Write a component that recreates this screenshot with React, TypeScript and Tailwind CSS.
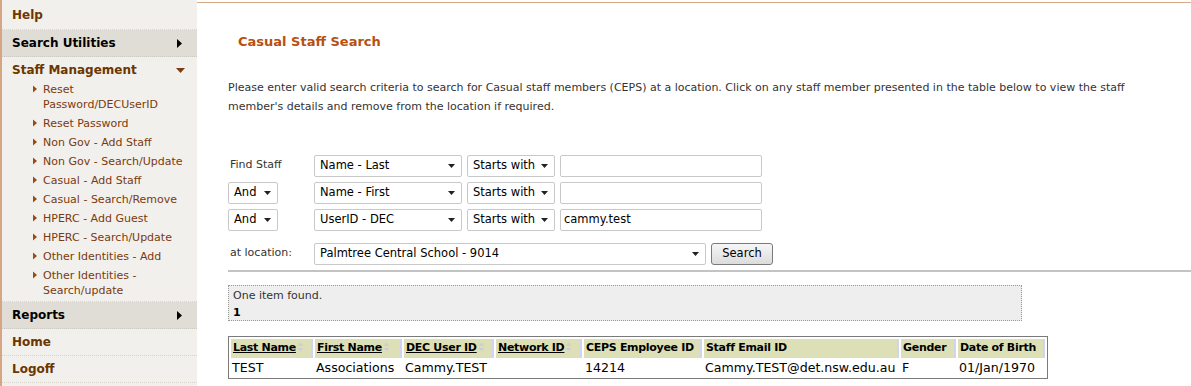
import React from 'react'

const font = { fontFamily: 'Verdana, "DejaVu Sans", sans-serif' }

function Tri({ dir = 'right', className = '' }: { dir?: 'right' | 'down'; className?: string }) {
  if (dir === 'down')
    return (
      <svg width="9" height="5" viewBox="0 0 9 5" className={className}>
        <path d="M0 0h9L4.5 5z" fill="currentColor" />
      </svg>
    )
  return (
    <svg width="5" height="9" viewBox="0 0 5 9" className={className}>
      <path d="M0 0l5 4.5L0 9z" fill="currentColor" />
    </svg>
  )
}

const subItems = [
  ['Reset', 'Password/DECUserID'],
  ['Reset Password'],
  ['Non Gov - Add Staff'],
  ['Non Gov - Search/Update'],
  ['Casual - Add Staff'],
  ['Casual - Search/Remove'],
  ['HPERC - Add Guest'],
  ['HPERC - Search/Update'],
  ['Other Identities - Add'],
  ['Other Identities -', 'Search/update'],
]

function Sidebar() {
  return (
    <div className="w-[197px] shrink-0 bg-[#f2f0ec] border-l-2 border-[#d6a584] text-[12px]">
      <div className="h-[30px] flex items-center pl-[10px] font-bold text-[#6b3600] border-b border-dotted border-[#d8d4cc]">
        Help
      </div>
      <div className="h-[27px] flex items-center justify-between pl-[10px] pr-[15px] font-bold text-black bg-[#e0ddd6] border-b border-dotted border-[#cfcac1]">
        Search Utilities
        <Tri />
      </div>
      <div className="h-[23px] pt-[6px] leading-[14px] flex items-start justify-between pl-[10px] pr-[12px] font-bold text-[#6b3600]">
        Staff Management
        <Tri dir="down" className="text-[#7a3d10] mt-[5px]" />
      </div>
      <div className="pb-[1px] border-b border-dotted border-[#d8d4cc]">
        {subItems.map((lines, i) => (
          <div key={i} className="flex pl-[31px] pr-2 text-[11px] leading-[15px] text-[#7a3a0f] py-[2px]">
            <Tri className="text-[#9a4a12] mt-[3px] w-[4px] h-[8px] mr-[6px] shrink-0" />
            <div>
              {lines.map((l) => (
                <div key={l}>{l}</div>
              ))}
            </div>
          </div>
        ))}
      </div>
      <div className="h-[27px] flex items-center justify-between pl-[10px] pr-[15px] font-bold text-black bg-[#e0ddd6] border-b border-dotted border-[#cfcac1]">
        Reports
        <Tri />
      </div>
      <div className="h-[27px] flex items-center pl-[10px] font-bold text-[#6b3600] border-b border-dotted border-[#d8d4cc]">
        Home
      </div>
      <div className="h-[27px] flex items-center pl-[10px] font-bold text-[#6b3600] border-b border-dotted border-[#d8d4cc]">
        Logoff
      </div>
      <div className="h-[20px]" />
    </div>
  )
}

function Select({ w, value }: { w: string; value: string }) {
  return (
    <div
      className={`${w} h-[22px] shrink-0 flex items-center justify-between pl-[5px] pr-[6px] border border-[#c9c9c9] rounded-[2px] bg-white text-[11.5px] text-black`}
    >
      <span>{value}</span>
      <Tri dir="down" className="w-[7px] h-[4px] text-[#222]" />
    </div>
  )
}

function Input({ value = '' }: { value?: string }) {
  return (
    <div className="w-[202px] h-[22px] flex items-center px-[3px] border border-[#c9c9c9] rounded-[2px] bg-white text-[11.5px] text-black">
      {value}
    </div>
  )
}

const cols = [
  { t: 'Last Name', w: 'w-[82px]', s: true },
  { t: 'First Name', w: 'w-[87px]', s: true },
  { t: 'DEC User ID', w: 'w-[90px]', s: true },
  { t: 'Network ID', w: 'w-[86px]', s: true },
  { t: 'CEPS Employee ID', w: 'w-[118px]', s: false },
  { t: 'Staff Email ID', w: 'w-[195px]', s: false },
  { t: 'Gender', w: 'w-[55px]', s: false },
  { t: 'Date of Birth', w: 'w-[87px]', s: false },
]
const row = ['TEST', 'Associations', 'Cammy.TEST', '', '14214', 'Cammy.TEST@det.nsw.edu.au', 'F', '01/Jan/1970']

function SortIcon() {
  return (
    <svg width="7" height="10" viewBox="0 0 7 10" className="inline-block ml-[1px] align-[-1px]">
      <path d="M0.5 4L3.5 0.5 6.5 4z" fill="#cfcfcf" />
      <path d="M0.5 6h6L3.5 9.5z" fill="#cfcfcf" />
    </svg>
  )
}

export default function App() {
  return (
    <div className="w-[1191px] h-[386px] overflow-hidden bg-white flex text-[#333]" style={font}>
      <Sidebar />
      <div className="flex-1 pt-[2px]">
        <div className="h-[1px] bg-[#d9a98a]" />
        <div className="pl-[31px] pr-[10px]">
          <h1 className="mt-[29px] ml-[10px] text-[13px] font-bold text-[#b8500f]">Casual Staff Search</h1>
          <p className="mt-[26px] text-[11px] leading-[19px] text-[#333]">
            Please enter valid search criteria to search for Casual staff members (CEPS) at a location. Click on any staff
            member presented in the table below to view the staff member's details and remove from the location if required.
          </p>
          <div className="mt-[39px] flex flex-col gap-[5px]">
            <div className="flex items-center">
              <div className="w-[86px] pl-[2px] text-[11px]">Find Staff</div>
              <div className="flex gap-[5px]">
                <Select w="w-[148px]" value="Name - Last" />
                <Select w="w-[88px]" value="Starts with" />
                <Input />
              </div>
            </div>
            {[
              ['Name - First', ''],
              ['UserID - DEC', 'cammy.test'],
            ].map(([f, v]) => (
              <div key={f} className="flex items-center">
                <div className="w-[86px]">
                  <Select w="w-[50px]" value="And" />
                </div>
                <div className="flex gap-[5px]">
                  <Select w="w-[148px]" value={f} />
                  <Select w="w-[88px]" value="Starts with" />
                  <Input value={v} />
                </div>
              </div>
            ))}
          </div>
          <div className="mt-[12px] flex items-center">
            <div className="w-[86px] pl-[2px] text-[11px]">at location:</div>
            <Select w="w-[392px]" value="Palmtree Central School - 9014" />
            <button className="ml-[5px] w-[62px] h-[22px] border border-[#7a7a7a] rounded-[3px] bg-gradient-to-b from-[#f6f6f6] to-[#dcdcdc] text-[11.5px] text-black">
              Search
            </button>
          </div>
        </div>
        <div className="ml-[31px] mt-[5px] h-[2px] bg-[#c3c3c3]" />
        <div className="ml-[31px] mt-[13px] w-[794px] h-[36px] border border-dotted border-[#9a9a9a] bg-[#eeeeee] px-[4px] pt-[1px] text-[11px] leading-[17px]">
          <div>One item found.</div>
          <div className="font-bold text-black">1</div>
        </div>
        <table className="ml-[31px] mt-[15px] table-fixed border border-[#7a7a7a] border-separate border-spacing-[2px] text-[12.6px] text-black">
          <thead>
            <tr>
              {cols.map((c) => (
                <th
                  key={c.t}
                  className={`${c.w} h-[19px] p-0 pl-[2px] text-left text-[11px] tracking-[-0.3px] font-bold bg-[#dde0b7] border-r-2 border-[#d0d4f2] whitespace-nowrap overflow-hidden`}
                >
                  {c.s ? (
                    <>
                      <span className="underline">{c.t}</span>
                      <SortIcon />
                    </>
                  ) : (
                    c.t
                  )}
                </th>
              ))}
            </tr>
          </thead>
          <tbody>
            <tr>
              {row.map((v, i) => (
                <td key={i} className="p-0 pl-[1px] h-[16px] leading-[16px] whitespace-nowrap overflow-visible">
                  {v}
                </td>
              ))}
            </tr>
          </tbody>
        </table>
      </div>
    </div>
  )
}
